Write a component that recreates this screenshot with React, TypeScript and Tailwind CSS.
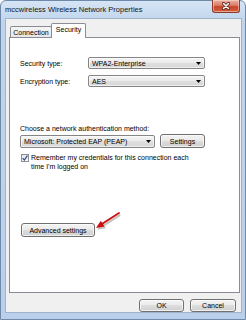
import React from "react"

const btn =
  "flex items-center justify-center rounded-[3px] border border-[#707070] bg-[image:linear-gradient(#f3f3f3,#ebebeb_45%,#dddddd_50%,#cfcfcf)] text-[7px] leading-none text-black shadow-[inset_0_0_0_1px_rgba(255,255,255,0.7)]"

const combo =
  "flex items-center justify-between rounded-[2px] border border-[#858585] bg-[image:linear-gradient(#f5f5f5,#ebebeb_45%,#dfdfdf_50%,#d6d6d6)] pl-[3px] pr-[3px] text-[7px] leading-none text-black shadow-[inset_0_0_0_1px_rgba(255,255,255,0.6)]"

function DropArrow() {
  return (
    <svg width="5" height="3" viewBox="0 0 5 3" className="shrink-0">
      <polygon points="0,0 5,0 2.5,3" fill="#000" />
    </svg>
  )
}

function Combo({ value, className }: { value: string; className: string }) {
  return (
    <div className={`${combo} ${className}`}>
      <span>{value}</span>
      <DropArrow />
    </div>
  )
}

export default function App() {
  return (
    <div className="relative h-[320px] w-[246px] overflow-hidden font-['Liberation_Sans',Arial,sans-serif]">
      <div className="flex h-full flex-col rounded-t-[6px] border border-[#6f89a8] bg-[image:linear-gradient(#d6e5f5,#c0d5ed_20px,#bad0ea)] pb-[6px] pl-[4px] pr-[3px]">
        {/* Title bar */}
        <div className="flex h-[17px] items-center justify-between">
          <span className="text-[7.5px] leading-none text-[#141414]">
            mccwireless Wireless Network Properties
          </span>
          <div className="-mt-px mr-[2px] flex h-[13px] w-[28px] items-center justify-center self-start rounded-b-[3px] border border-t-0 border-[#8b3b2b] bg-[image:linear-gradient(#eab0a3,#dd7b66_45%,#c8442a_55%,#d2603f)] shadow-[inset_0_0_0_1px_rgba(255,230,220,0.5)]">
            <svg width="10" height="8" viewBox="0 0 10 8">
              <path d="M2.5 1.5 L7.5 6.5 M7.5 1.5 L2.5 6.5" stroke="#4a1a10" strokeWidth="3" strokeLinecap="round" />
              <path d="M2.5 1.5 L7.5 6.5 M7.5 1.5 L2.5 6.5" stroke="#fff" strokeWidth="1.6" strokeLinecap="round" />
            </svg>
          </div>
        </div>

        {/* Client area */}
        <div className="flex flex-1 flex-col border border-[#9fb3cc] bg-[#f0f0f0] pl-[3px] pr-[1px]">
          {/* Tabs */}
          <div className="flex h-[18px] items-end pl-[1px]">
            <div className="flex h-[11px] w-[42px] items-center justify-center rounded-t-[2px] border border-b-0 border-[#898c95] bg-[image:linear-gradient(#f6f6f6,#e6e6e6)] text-[7px] leading-none text-black">
              Connection
            </div>
            <div className="relative z-10 -mb-px -ml-px flex h-[15px] w-[35px] items-start justify-center rounded-t-[2px] border border-b-0 border-[#898c95] bg-white pt-[2px] text-[7px] leading-none text-black">
              Security
            </div>
          </div>

          {/* Panel */}
          <div className="flex flex-1 flex-col border border-[#898c95] bg-white pl-[10px] pt-[19px] text-[7px] text-black">
            <div className="flex h-[12px] items-center">
              <span className="w-[68px] leading-none">Security type:</span>
              <Combo value="WPA2-Enterprise" className="h-[12px] w-[117px]" />
            </div>
            <div className="mt-[6px] flex h-[12px] items-center">
              <span className="w-[68px] leading-none">Encryption type:</span>
              <Combo value="AES" className="h-[12px] w-[117px]" />
            </div>

            <div className="mt-[37px] h-[9px] leading-[9px]">Choose a network authentication method:</div>
            <div className="mt-[1px] flex h-[14px] items-center">
              <Combo value="Microsoft: Protected EAP (PEAP)" className="h-[13px] w-[135px]" />
              <div className={`${btn} ml-[5px] h-[14px] w-[45px]`}>Settings</div>
            </div>

            <div className="mt-[5px] flex items-start">
              <div className="ml-[1px] mt-[1px] flex h-[8px] w-[8px] shrink-0 items-center justify-center border border-[#8e8f8f] bg-[image:linear-gradient(#e6e6e6,#fafafa)]">
                <svg width="6" height="6" viewBox="0 0 6 6">
                  <path d="M0.6 3.2 L2.3 5.1 L5.4 0.6" stroke="#2d4d8f" strokeWidth="1.2" fill="none" />
                </svg>
              </div>
              <div className="ml-[2px] leading-[9px]">
                Remember my credentials for this connection each
                <br />
                time I'm logged on
              </div>
            </div>

            <div className={`${btn} ml-[1px] mt-[52px] h-[14px] w-[74px]`}>Advanced settings</div>
          </div>

          {/* Footer buttons */}
          <div className="flex justify-end gap-[6px] pr-[4px] pt-[6px]">
            <div className={`${btn} h-[13px] w-[45px] border-[#3c7fb1] bg-[image:linear-gradient(#eef6fc,#e2f0fb_45%,#cfe7fa_50%,#c4e0f6)] shadow-[inset_0_0_0_1px_rgba(180,225,250,0.9)]`}>
              OK
            </div>
            <div className={`${btn} h-[13px] w-[46px]`}>Cancel</div>
          </div>
        </div>
      </div>

      {/* Red annotation arrow */}
      <svg className="absolute left-[90px] top-[208px]" width="36" height="28" viewBox="0 0 36 28">
        <g opacity="0.35" transform="translate(1.2 1.8)">
          <line x1="29" y1="5" x2="12.7" y2="15.6" stroke="#555" strokeWidth="2" />
          <polygon points="6,20 14.6,18.5 10.8,12.7" fill="#555" />
        </g>
        <line x1="29" y1="5" x2="12.7" y2="15.6" stroke="#cc1010" strokeWidth="1.8" strokeLinecap="round" />
        <polygon points="6,20 14.6,18.5 10.8,12.7" fill="#cc1010" />
      </svg>
    </div>
  )
}
